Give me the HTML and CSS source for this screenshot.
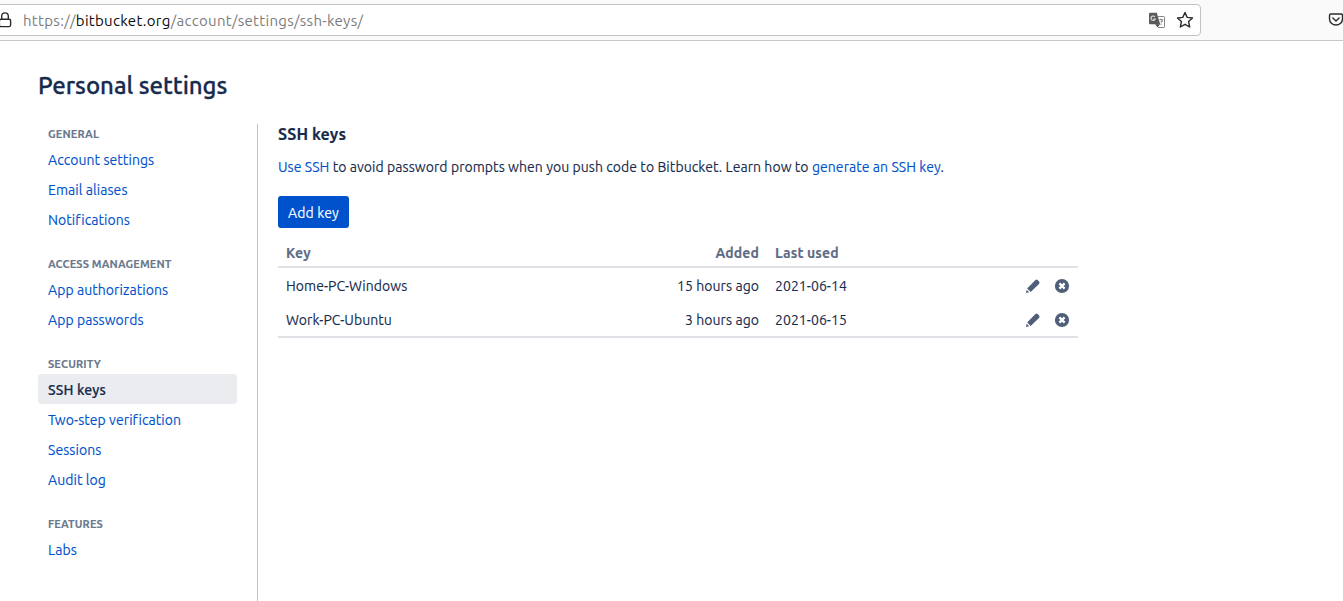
FILE: index.html
```html
<!DOCTYPE html>
<html lang="en">
<head>
<meta charset="utf-8">
<title>SSH keys</title>
<link rel="stylesheet" href="styles.css">
</head>
<body>
<svg class="defs" width="0" height="0" aria-hidden="true">
  <symbol id="pencil" viewBox="0 0 16 16">
    <path d="M1 15l.6-3.200 2.600 2.500z M2.100 10.400L10.200 2.200q1.200-1.100 2.400-.1l1.500 1.500q1 1.100-.1 2.300L5.700 14z"/>
  </symbol>
  <symbol id="remove" viewBox="0 0 16 16">
    <circle cx="8" cy="8" r="7.100"/>
    <path class="cross" d="M5.400 5.400l5.200 5.200M10.600 5.400l-5.200 5.200"/>
  </symbol>
</svg>
<div class="toolbar">
  <div class="urlbar">
    <svg class="lock" width="14" height="18" viewBox="0 0 14 18"><path d="M2.700 8V5.200a3.300 3.300 0 0 1 6.600 0V8"/><rect x=".4" y="8.200" width="11.200" height="7.400" rx="1.600"/></svg>
    <span class="url">https://<span class="domain">bitbucket.org</span>/account/settings/ssh-keys/</span>
    <svg class="translate" width="16" height="17" viewBox="0 0 16 17">
      <path class="back" d="M1.200 .700h6.600l3.400 11.500H1.200Q0 12.200 0 11V1.900Q0 .7 1.200 .7z"/>
      <path class="fold" d="M6 12.200h5l-2.300 3z"/>
      <path class="page" d="M9.200 4.500h5.600q.7 0 .7.700v9.600q0 .7-.7.700H9"/>
      <path class="g" d="M5.900 4.900a2.200 2.200 0 1 0 .3 2.100H4.400"/>
      <path class="q" d="M10.900 8.200c.2-1.200 2.500-1.200 2.500.2 0 1-1.300 1-1.300 2.100M12.100 11.700v1"/>
    </svg>
    <svg class="star" width="18" height="18" viewBox="0 0 18 18"><path d="M9 1.500l2.200 4.900 5.300.6-3.900 3.600 1.100 5.400L9 13.300 4.300 16l1.100-5.400L1.500 7l5.300-.6z"/></svg>
  </div>
  <svg class="pocket" width="16" height="16" viewBox="0 0 16 16"><path d="M2.900 2h10.200q1.400 0 1.400 1.400v3.600a6.500 6 0 0 1-13 0V3.400Q1.500 2 2.900 2z"/><path d="M4.900 6l3.100 3 3.100-3"/></svg>
</div>
<div class="page-body">
  <h1 class="page-title">Personal settings</h1>
  <div class="columns">
    <nav class="sidebar">
      <section class="group">
        <h2 class="group-title">General</h2>
        <a class="item">Account settings</a>
        <a class="item">Email aliases</a>
        <a class="item">Notifications</a>
      </section>
      <section class="group">
        <h2 class="group-title">Access management</h2>
        <a class="item">App authorizations</a>
        <a class="item">App passwords</a>
      </section>
      <section class="group">
        <h2 class="group-title">Security</h2>
        <a class="item active">SSH keys</a>
        <a class="item">Two-step verification</a>
        <a class="item">Sessions</a>
        <a class="item">Audit log</a>
      </section>
      <section class="group">
        <h2 class="group-title">Features</h2>
        <a class="item">Labs</a>
      </section>
    </nav>
    <main class="content">
      <h2 class="section-title">SSH keys</h2>
      <p class="description"><a>Use SSH</a> to avoid password prompts when you push code to Bitbucket. Learn how to <a>generate an SSH key</a>.</p>
      <button class="add-key">Add key</button>
      <div class="keys">
        <div class="row head"><span>Key</span><span class="added">Added</span><span class="used">Last used</span></div>
        <div class="row">
          <span class="name">Home-PC-Windows</span><span class="added">15 hours ago</span><span class="used">2021-06-14</span>
          <span class="actions"><svg width="16" height="16"><use href="#pencil"/></svg><svg width="16" height="16"><use href="#remove"/></svg></span>
        </div>
        <div class="row">
          <span class="name">Work-PC-Ubuntu</span><span class="added">3 hours ago</span><span class="used">2021-06-15</span>
          <span class="actions"><svg width="16" height="16"><use href="#pencil"/></svg><svg width="16" height="16"><use href="#remove"/></svg></span>
        </div>
      </div>
    </main>
  </div>
</div>
</body>
</html>
```
FILE: styles.css
```css
* { box-sizing: border-box; }
body {
  margin: 0;
  height: 601px;
  overflow: hidden;
  display: flex;
  flex-direction: column;
  background: #fff;
  color: #172b4d;
  font: 14px/20px Ubuntu, "Noto Sans", sans-serif;
  letter-spacing: 0.06px;
  -webkit-text-stroke: 0.12px;
  white-space: nowrap;
}
svg { display: block; flex: none; }
.defs { position: absolute; }
.toolbar {
  flex: none;
  height: 41px;
  display: flex;
  align-items: flex-start;
  justify-content: space-between;
  padding-top: 4px;
  background: #fafafa;
  border-bottom: 1px solid #c8c8c8;
  -webkit-text-stroke: 0;
}
.urlbar {
  width: 1206px;
  height: 32px;
  margin-left: -5px;
  padding: 0 6px 0 3px;
  display: flex;
  align-items: center;
  background: #fff;
  border: 1px solid #c2c2c2;
  border-radius: 4px;
}
.lock, .star, .pocket { fill: none; stroke: #2b2b2e; stroke-width: 1.4; stroke-linejoin: round; stroke-linecap: round; }
.lock { overflow: visible; }
.url { flex: 1; margin-left: 10px; padding-top: 2px; font-size: 15px; letter-spacing: 0.3px; color: #7c7c7d; }
.domain { color: #0c0c0d; }
.translate { margin-right: 11px; }
.back { fill: #5b5b5c; }
.fold { fill: #444; }
.page { fill: none; stroke: #858585; }
.g { fill: none; stroke: #ddd; stroke-width: 1.2; }
.q { fill: none; stroke: #858585; stroke-width: 1.3; }
.pocket { margin: 8px -1px 0 0; }
.page-body { flex: 1; display: flex; flex-direction: column; padding: 31px 38px 0; }
.page-title { margin: 0; font-size: 24px; line-height: 28px; font-weight: 500; letter-spacing: -0.03px; -webkit-text-stroke: 0.3px; }
.columns { flex: 1; display: flex; padding-top: 24px; }
.sidebar { width: 199px; margin-right: 20px; }
.group { display: flex; flex-direction: column; margin-bottom: 20px; }
.group-title { margin: 0; height: 20px; padding-left: 10px; color: #6b778c; font-size: 11px; line-height: 20px; font-weight: 700; text-transform: uppercase; letter-spacing: 0.12px; }
.item { height: 30px; padding-left: 10px; line-height: 32px; color: #0052cc; border-radius: 3px; }
.active { background: #ebecf0; color: #172b4d; font-weight: 500; letter-spacing: 0.15px; -webkit-text-stroke: 0.2px; }
.content { width: 821px; padding-left: 20px; border-left: 1px solid #c1c1c3; }
.section-title { margin: 0; font-size: 16px; line-height: 20px; font-weight: 600; letter-spacing: 0.1px; }
.description { margin: 13px 0 0; line-height: 20px; }
.description a { color: #0052cc; }
.add-key { display: block; width: 71px; height: 32px; margin: 19px 0 0; padding: 1px 0 0; border: 0; border-radius: 3px; background: #0052cc; color: #fff; font: inherit; letter-spacing: 0.12px; }
.keys { margin-top: 10px; border-bottom: 2px solid #dfe1e6; }
.row { height: 34px; display: grid; grid-template-columns: 281px 200px 1fr auto; align-items: center; padding: 2px 8px 0; }
.head { height: 30px; padding-top: 1px; border-bottom: 2px solid #dfe1e6; color: #5e6c84; font-weight: 600; letter-spacing: 0.12px; }
.added { padding-right: 8px; text-align: right; }
.used { padding-left: 8px; }
.actions { display: flex; gap: 13px; fill: #505f79; }
.cross { stroke: #fff; stroke-width: 2.2; }
```
